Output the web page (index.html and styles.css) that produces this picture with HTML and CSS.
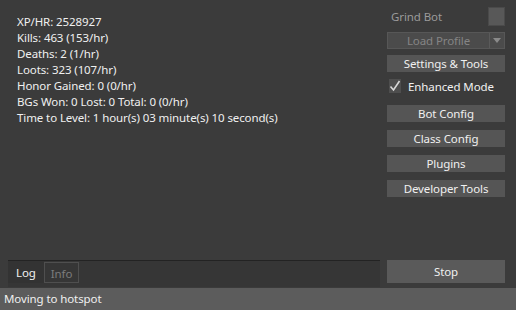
FILE: index.html
```html
<!DOCTYPE html>
<html lang="en">
<head>
    <meta charset="UTF-8">
    <title>Grind Bot</title>
    <link rel="stylesheet" href="styles.css">
</head>
<body>
    <div class="window">
        <div class="main">
            <div class="stats">
                <div>XP/HR: 2528927</div>
                <div>Kills: 463 (153/hr)</div>
                <div>Deaths: 2 (1/hr)</div>
                <div>Loots: 323 (107/hr)</div>
                <div>Honor Gained: 0 (0/hr)</div>
                <div>BGs Won: 0 Lost: 0 Total: 0 (0/hr)</div>
                <div>Time to Level: 1 hour(s) 03 minute(s) 10 second(s)</div>
            </div>
            <div class="side">
                <div class="bot-row">
                    <span class="bot-name">Grind Bot</span>
                    <span class="bot-box"></span>
                </div>
                <div class="dropdown">
                    <span class="dropdown-label">Load Profile</span>
                    <span class="dropdown-arrow">
                        <svg width="8" height="5" viewBox="0 0 8 5"><path d="M0 0h8L4 5z" fill="#8a8a8a"/></svg>
                    </span>
                </div>
                <button class="btn">Settings &amp; Tools</button>
                <label class="check">
                    <span class="check-box">
                        <svg width="12" height="12" viewBox="0 0 12 12"><path d="M1.5 6.5l3 3.5 6-9" fill="none" stroke="#d8d8d8" stroke-width="1.6"/></svg>
                    </span>
                    Enhanced Mode
                </label>
                <div class="btn-group">
                    <button class="btn">Bot Config</button>
                    <button class="btn">Class Config</button>
                    <button class="btn">Plugins</button>
                    <button class="btn">Developer Tools</button>
                </div>
            </div>
        </div>
        <div class="bottom">
            <div class="tabs">
                <span class="tab active">Log</span>
                <span class="tab">Info</span>
            </div>
            <button class="btn stop">Stop</button>
        </div>
        <div class="status">Moving to hotspot</div>
    </div>
</body>
</html>
```

FILE: styles.css
```css
:root {
    --bg: #3b3b3b;
    --btn: #555555;
    --text: #f0f0f0;
    --dim: #8c8c8c;
}

* {
    box-sizing: border-box;
    font-family: 'Noto Sans', 'Open Sans', sans-serif;
}

body {
    margin: 0;
    background: var(--bg);
    color: var(--text);
    font-size: 11.5px;
    letter-spacing: -0.1px;
}

.window {
    width: 516px;
    height: 310px;
    display: flex;
    flex-direction: column;
}

.main {
    flex: 1;
    display: flex;
}

.stats {
    flex: 1;
    padding: 14px 0 0 17px;
    line-height: 16px;
}

.side {
    width: 118px;
    margin-right: 11px;
    padding-top: 7px;
    display: flex;
    flex-direction: column;
}

.bot-row {
    display: flex;
    align-items: center;
    justify-content: space-between;
    height: 19px;
    padding-left: 4px;
    margin-bottom: 6px;
}

.bot-name {
    color: #9a9a9a;
}

.bot-box {
    width: 17px;
    height: 19px;
    background: #585858;
    border: 1px solid #4a4a4a;
}

.dropdown {
    display: flex;
    height: 17px;
    background: #4b4b4b;
    border: 1px solid #575757;
    margin-bottom: 6px;
}

.dropdown-label {
    flex: 1;
    text-align: center;
    color: #858585;
    line-height: 15px;
}

.dropdown-arrow {
    width: 15px;
    border-left: 1px solid #5a5a5a;
    display: flex;
    align-items: center;
    justify-content: center;
}

.btn {
    display: block;
    width: 100%;
    height: 17px;
    padding: 0;
    background: var(--btn);
    color: var(--text);
    border: none;
    font-size: 11.5px;
    letter-spacing: -0.1px;
    line-height: 17px;
}

.check {
    display: flex;
    align-items: center;
    gap: 7px;
    height: 16px;
    margin: 6px 0 0 2px;
}

.check-box {
    width: 12px;
    height: 14px;
    background: #4e4e4e;
    display: flex;
    align-items: center;
    justify-content: center;
}

.btn-group {
    display: flex;
    flex-direction: column;
    gap: 8px;
    margin-top: 11px;
}

.bottom {
    height: 29px;
    display: flex;
    align-items: flex-start;
}

.tabs {
    width: 372px;
    margin-left: 8px;
    margin-top: 1px;
    border-top: 1px solid #232323;
    display: flex;
    height: 27px;
    background: #363636;
}

.tab {
    padding: 2px 8px 0;
    height: 22px;
    line-height: 20px;
    color: #7c7c7c;
}

.tab.active {
    color: var(--text);
    background: #333333;
}

.tab:not(.active) {
    border: 1px solid #4f4f4f;
    padding: 1px 6px 0;
    margin-top: 1px;
    height: 21px;
}

.stop {
    width: 118px;
    height: 23px;
    margin-left: 7px;
    margin-top: 1px;
    background: #5a5a5a;
    line-height: 23px;
}

.status {
    height: 22px;
    background: #5c5c5c;
    padding-left: 4px;
    line-height: 22px;
}
```
